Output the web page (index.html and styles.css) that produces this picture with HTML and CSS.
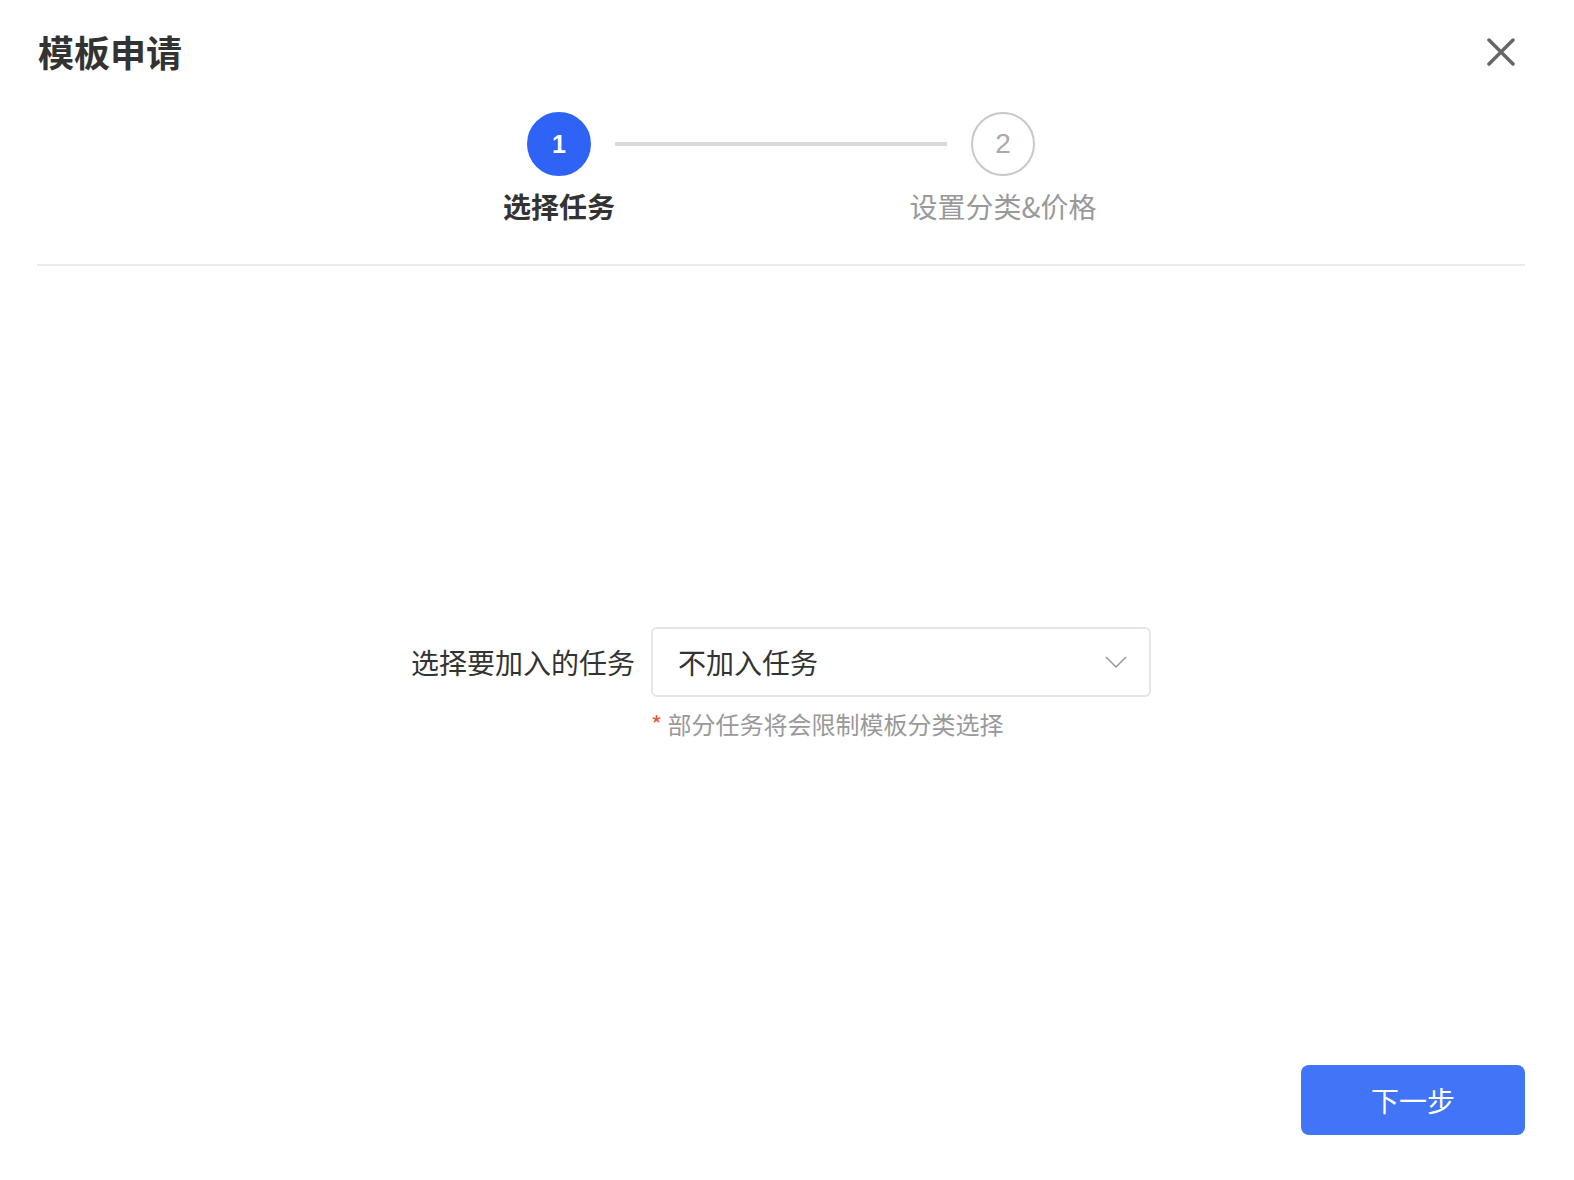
FILE: index.html
```html
<!DOCTYPE html>
<html lang="zh-CN">
<head>
    <meta charset="UTF-8">
    <meta name="viewport" content="width=device-width, initial-scale=1.0">
    <title>模板申请</title>
    <link rel="stylesheet" href="styles.css">
</head>
<body>
    <div class="dialog">
        <header class="dialog-header">
            <h1 class="dialog-title">模板申请</h1>
            <button class="close-btn" aria-label="关闭">
                <svg width="28" height="28" viewBox="0 0 28 28">
                    <path d="M2 2 L26 26 M26 2 L2 26" stroke="#666" stroke-width="3.5" stroke-linecap="round" fill="none"/>
                </svg>
            </button>
        </header>

        <div class="steps">
            <div class="step active">
                <div class="step-num">1</div>
                <div class="step-label">选择任务</div>
            </div>
            <div class="step-line"></div>
            <div class="step">
                <div class="step-num">2</div>
                <div class="step-label">设置分类&amp;价格</div>
            </div>
        </div>

        <div class="divider"></div>

        <main class="dialog-body">
            <div class="form-row">
                <label class="form-label">选择要加入的任务</label>
                <div class="select">
                    <span class="select-value">不加入任务</span>
                    <svg class="select-arrow" width="22" height="12" viewBox="0 0 22 12">
                        <path d="M1 1 L11 11 L21 1" stroke="#999" stroke-width="1.5" fill="none"/>
                    </svg>
                </div>
                <div class="form-hint"><span class="star">*</span> 部分任务将会限制模板分类选择</div>
            </div>
        </main>

        <footer class="dialog-footer">
            <button class="btn-primary">下一步</button>
        </footer>
    </div>
</body>
</html>
```

FILE: styles.css
```css
body {
    margin: 0;
    font-family: "Noto Sans CJK SC", "Noto Sans", sans-serif;
    color: #333;
    background: #fff;
}
.dialog {
    min-height: 100vh;
    box-sizing: border-box;
    padding: 28px 49px 45px 37px;
    display: flex;
    flex-direction: column;
}
.dialog-header {
    display: flex;
    justify-content: space-between;
    align-items: center;
    height: 48px;
}
.dialog-title {
    margin: 0 0 3px 1px;
    font-size: 36px;
    line-height: 44px;
    font-weight: bold;
    color: #333;
}
.close-btn {
    border: none;
    background: none;
    padding: 0;
    margin-right: 10px;
    width: 28px;
    height: 28px;
    cursor: pointer;
    display: flex;
}
.steps {
    display: flex;
    justify-content: center;
    margin-top: 36px;
}
.step {
    width: 64px;
    display: flex;
    flex-direction: column;
    align-items: center;
}
.step-num {
    width: 64px;
    height: 64px;
    box-sizing: border-box;
    border-radius: 50%;
    border: 2px solid #c8c8c8;
    color: #aaa;
    font-family: "Liberation Sans", sans-serif;
    font-size: 28px;
    display: flex;
    justify-content: center;
    align-items: center;
}
.step.active .step-num {
    background: #2e63f6;
    border-color: #2e63f6;
    color: #fff;
    font-weight: bold;
    font-size: 25px;
}
.step-label {
    margin-top: 10px;
    font-size: 28px;
    line-height: 40px;
    white-space: nowrap;
    color: #999;
}
.step.active .step-label {
    color: #333;
    font-weight: bold;
}
.step-line {
    width: 332px;
    height: 4px;
    margin: 30px 24px 0;
    background: #d9d9d9;
}
.divider {
    margin-top: 38px;
    border-top: 2px solid #e8eaee;
}
.dialog-body {
    flex: 1;
    padding-top: 361px;
}
.form-row {
    display: grid;
    grid-template-columns: auto 500px;
    grid-template-rows: 70px auto;
    column-gap: 16px;
    justify-content: center;
    align-items: center;
}
.form-label {
    font-size: 28px;
    line-height: 40px;
    color: #333;
}
.select {
    height: 70px;
    box-sizing: border-box;
    border: 2px solid #e3e5ea;
    border-radius: 6px;
    padding: 0 22px 0 25px;
    display: flex;
    justify-content: space-between;
    align-items: center;
}
.select-value {
    font-size: 28px;
    color: #333;
}
.form-hint {
    grid-column: 2;
    margin-top: 10px;
    font-size: 24px;
    line-height: 34px;
    color: #999;
}
.star {
    color: #f0533b;
}
.dialog-footer {
    display: flex;
    justify-content: flex-end;
}
.btn-primary {
    width: 224px;
    height: 70px;
    border: none;
    border-radius: 8px;
    background: #4174f6;
    color: #fff;
    font-family: inherit;
    font-size: 28px;
    cursor: pointer;
}
```
